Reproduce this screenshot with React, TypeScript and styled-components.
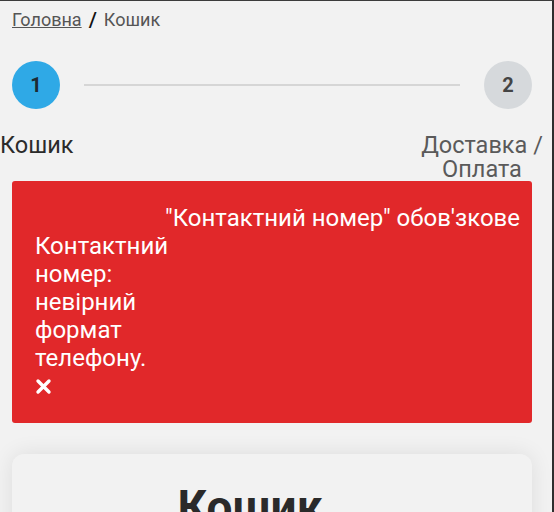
import React from 'react';
import styled, { createGlobalStyle } from 'styled-components';

const GlobalStyle = createGlobalStyle`
  html, body {
    margin: 0;
    padding: 0;
    background: #f2f2f2;
    font-family: Roboto, 'Liberation Sans', sans-serif;
  }
  * {
    box-sizing: border-box;
  }
`;

const Page = styled.div`
  height: 100vh;
  border-top: 1px solid #3c3c3c;
  border-right: 2px solid #2e2e2e;
  background: #f2f2f2;
  overflow: hidden;
`;

const Breadcrumbs = styled.nav`
  display: flex;
  align-items: center;
  gap: 7px;
  padding: 2px 12px 0;
  height: 35px;
  font-size: 18px;
  color: #555;

  a {
    color: #555;
    text-decoration: underline;
  }
`;

const Slash = styled.span`
  color: #111;
  font-size: 21px;
  font-weight: 500;
`;

const Stepper = styled.div`
  display: flex;
  align-items: center;
  padding: 25px 20px 0 12px;
`;

const StepCircle = styled.div<{ active?: boolean }>`
  width: 48px;
  height: 48px;
  border-radius: 50%;
  display: flex;
  align-items: center;
  justify-content: center;
  flex-shrink: 0;
  font-size: 20px;
  font-weight: 700;
  background: ${p => (p.active ? '#2fa9e6' : '#d6d9dc')};
  color: ${p => (p.active ? '#1d2a33' : '#444')};
`;

const StepLine = styled.div`
  flex: 1;
  height: 2px;
  margin: 0 24px;
  background: #d6d6d6;
`;

const StepLabels = styled.div`
  display: flex;
  justify-content: space-between;
  align-items: flex-start;
  padding: 24px 6px 0 0;
  font-size: 23.5px;
  line-height: 24px;
`;

const StepLabel = styled.div<{ active?: boolean }>`
  color: ${p => (p.active ? '#2b2b2b' : '#5a5a5a')};
  text-align: center;
  width: ${p => (p.active ? 'auto' : '128px')};
`;

const Alert = styled.div`
  margin: 0 20px 0 12px;
  padding: 23px;
  background: #e1282a;
  border-radius: 3px;
  color: #fff;
  font-size: 24px;
  line-height: 28px;
`;

const AlertLead = styled.div`
  margin-left: 130px;
  white-space: nowrap;
`;

const AlertColumn = styled.div`
  width: 136px;
`;

const CloseButton = styled.button`
  padding: 0;
  border: none;
  background: none;
  color: #fff;
  height: 28px;
  cursor: pointer;
  display: flex;
  align-items: center;
`;

const Card = styled.section`
  margin: 31px 20px 0 12px;
  padding: 26px 44px 40px 0;
  border-radius: 12px;
  background: #f2f2f2;
  box-shadow: 0 0 22px rgba(0, 0, 0, 0.09);
`;

const CardTitle = styled.h1`
  margin: 0;
  text-align: center;
  font-size: 46px;
  font-weight: 700;
  color: #2a2a2a;
`;

export default function App() {
  return (
    <Page>
      <GlobalStyle />
      <Breadcrumbs>
        <a href="#">Головна</a>
        <Slash>/</Slash>
        <span>Кошик</span>
      </Breadcrumbs>

      <Stepper>
        <StepCircle active>1</StepCircle>
        <StepLine />
        <StepCircle>2</StepCircle>
      </Stepper>

      <StepLabels>
        <StepLabel active>Кошик</StepLabel>
        <StepLabel>Доставка / Оплата</StepLabel>
      </StepLabels>

      <Alert>
        <AlertLead>"Контактний номер" обов'зкове</AlertLead>
        <AlertColumn>
          Контактний номер: невірний формат телефону.
          <CloseButton aria-label="Закрити">
            <svg width="17" height="17" viewBox="0 0 17 17">
              <path d="M3 3 L14 14 M14 3 L3 14" stroke="#fff" strokeWidth="3.4" strokeLinecap="round" />
            </svg>
          </CloseButton>
        </AlertColumn>
      </Alert>

      <Card>
        <CardTitle>Кошик</CardTitle>
      </Card>
    </Page>
  );
}
